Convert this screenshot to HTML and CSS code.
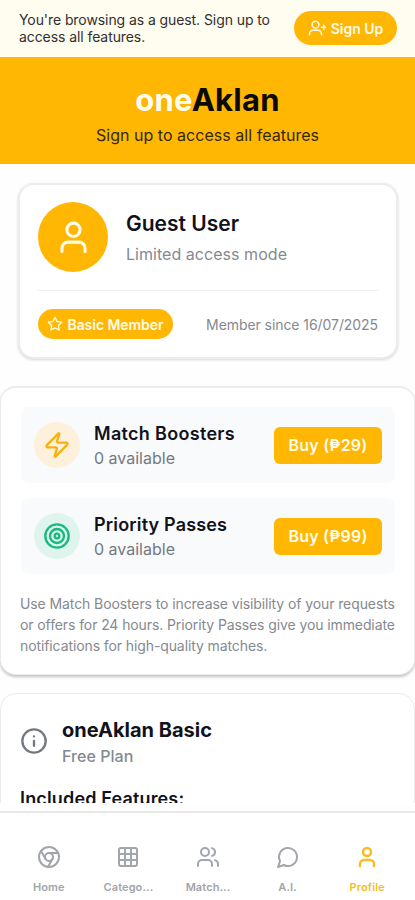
FILE: index.html
```html
<!DOCTYPE html>
<html lang="en">
<head>
<meta charset="utf-8">
<meta name="viewport" content="width=device-width, initial-scale=1">
<title>oneAklan Profile</title>
<link rel="stylesheet" href="styles.css">
</head>
<body>
<div class="app">
  <div class="guest-bar">
    <p class="guest-text">You're browsing as a guest. Sign up to<br>access all features.</p>
    <button class="signup">
      <svg class="icon" width="18" height="18" viewBox="0 0 24 24"><circle cx="10" cy="7.500" r="4.500"/><path d="M2 21v-1a5 5 0 0 1 5-5h6a5 5 0 0 1 5 5v1M21 8v6M18 11h6"/></svg>
      <span>Sign Up</span>
    </button>
  </div>
  <header class="hero">
    <h1 class="brand"><span class="brand-one">one</span>Aklan</h1>
    <p class="tagline">Sign up to access all features</p>
  </header>
  <main class="content">
    <section class="card user-card">
      <div class="user">
        <div class="avatar">
          <svg class="icon" width="37" height="37" viewBox="0 0 24 24"><circle cx="12" cy="7" r="4.300"/><path d="M19.500 21v-2a4 4 0 0 0-4-4h-7a4 4 0 0 0-4 4v2"/></svg>
        </div>
        <div>
          <h2 class="user-name">Guest User</h2>
          <p class="user-mode">Limited access mode</p>
        </div>
      </div>
      <div class="membership">
        <span class="badge">
          <svg class="icon" width="16" height="16" viewBox="0 0 24 24"><path d="m12 2 3.100 6.300 6.900 1-5 4.800 1.200 6.900-6.200-3.200L5.800 21 7 14.100 2 9.300l6.900-1z"/></svg>
          <span>Basic Member</span>
        </span>
        <span class="since">Member since 16/07/2025</span>
      </div>
    </section>
    <section class="card shop-card">
      <div class="product">
        <div class="product-icon boost">
          <svg class="icon" width="28" height="28" viewBox="0 0 24 24"><path d="M4 14a1 1 0 0 1-.78-1.630l9.900-10.200a.5.5 0 0 1 .86.46l-1.920 6.020A1 1 0 0 0 13 10h7a1 1 0 0 1 .78 1.630l-9.900 10.200a.5.5 0 0 1-.86-.46l1.920-6.020A1 1 0 0 0 11 14z"/></svg>
        </div>
        <div class="product-info">
          <h3 class="product-name boost-name">Match Boosters</h3>
          <p class="product-count">0 available</p>
        </div>
        <button class="buy">Buy (₱29)</button>
      </div>
      <div class="product">
        <div class="product-icon pass">
          <svg class="icon" width="28" height="28" viewBox="0 0 24 24"><circle cx="12" cy="12" r="10"/><circle cx="12" cy="12" r="6"/><circle cx="12" cy="12" r="2"/></svg>
        </div>
        <div class="product-info">
          <h3 class="product-name pass-name">Priority Passes</h3>
          <p class="product-count">0 available</p>
        </div>
        <button class="buy">Buy (₱99)</button>
      </div>
      <p class="shop-note">Use Match Boosters to increase visibility of your requests<br>or offers for 24 hours. Priority Passes give you immediate<br>notifications for high-quality matches.</p>
    </section>
    <section class="card plan-card">
      <div class="plan">
        <svg class="icon plan-icon" width="28" height="28" viewBox="0 0 24 24"><circle cx="12" cy="12" r="10"/><path d="M12 16v-4M12 8h.01"/></svg>
        <div>
          <h2 class="plan-name">oneAklan Basic</h2>
          <p class="plan-type">Free Plan</p>
        </div>
      </div>
      <h3 class="features">Included Features:</h3>
    </section>
  </main>
  <nav class="tabs">
    <a class="tab">
      <svg class="icon" width="24" height="24" viewBox="0 0 24 24"><circle cx="12" cy="12" r="10"/><circle cx="12" cy="12" r="4"/><path d="M21.170 8H12M3.950 6.060 8.540 14M10.880 21.940 15.460 14"/></svg>
      <span>Home</span>
    </a>
    <a class="tab">
      <svg class="icon" width="24" height="24" viewBox="0 0 24 24"><rect x="3" y="3" width="18" height="18" rx="2"/><path d="M3 9h18M3 15h18M9 3v18M15 3v18"/></svg>
      <span>Catego...</span>
    </a>
    <a class="tab">
      <svg class="icon" width="24" height="24" viewBox="0 0 24 24"><path d="M16 21v-2a4 4 0 0 0-4-4H6a4 4 0 0 0-4 4v2"/><circle cx="9" cy="7" r="4"/><path d="M22 21v-2a4 4 0 0 0-3-3.870M16 3.130a4 4 0 0 1 0 7.750"/></svg>
      <span>Match...</span>
    </a>
    <a class="tab">
      <svg class="icon" width="24" height="24" viewBox="0 0 24 24"><path d="M7.900 20A9 9 0 1 0 4 16.100L2 22z"/></svg>
      <span>A.I.</span>
    </a>
    <a class="tab active">
      <svg class="icon" width="24" height="24" viewBox="0 0 24 24"><circle cx="12" cy="7" r="4"/><path d="M19 21v-2a4 4 0 0 0-4-4H9a4 4 0 0 0-4 4v2"/></svg>
      <span>Profile</span>
    </a>
  </nav>
</div>
</body>
</html>
```
FILE: styles.css
```css
* { box-sizing: border-box; }
body, h1, h2, h3, p { margin: 0; }
body { background: #fefefe; font-family: Inter, "Noto Sans", sans-serif; color: #11121c; }
button { border: 0; padding: 0; font: inherit; white-space: nowrap; }

.app { display: flex; flex-direction: column; width: 415px; height: 900px; overflow: hidden; }
.icon { display: block; flex: none; fill: none; stroke: currentColor; stroke-width: 2; stroke-linecap: round; stroke-linejoin: round; }

.guest-bar { flex: none; display: flex; justify-content: space-between; align-items: center; height: 57px; padding: 0 18px 1px 19px; background: #fffcf0; }
.guest-text { font-size: 14px; line-height: 17px; letter-spacing: -.08px; white-space: nowrap; color: #30302f; }
.signup { display: flex; align-items: center; justify-content: center; gap: 5px; width: 103px; height: 34px; border-radius: 17px; background: #ffb703; color: #fffbea; font-size: 14px; font-weight: 600; }

.hero { flex: none; height: 107px; padding-top: 25px; background: #ffb703; text-align: center; }
.brand { font-size: 31px; line-height: 36px; font-weight: 700; letter-spacing: .25px; color: #0c0a05; }
.brand-one { color: #fffdf2; }
.tagline { margin-top: 6px; font-size: 16px; line-height: 22px; letter-spacing: .03px; color: #33270a; }

.content { flex: none; height: 639px; overflow: hidden; padding-top: 19px; }
.card { border: 1px solid #ececed; border-radius: 16px; background: #fff; }

.user-card { height: 176px; margin: 0 17px 0 18px; padding: 18px 18px 0; border-width: 2px; box-shadow: 0 1px 3px rgba(0, 0, 0, .16); }
.user { display: flex; align-items: center; gap: 18px; height: 88px; padding-bottom: 19px; border-bottom: 1px solid #f1f1f2; }
.avatar { display: flex; align-items: center; justify-content: center; width: 70px; height: 70px; border-radius: 50%; background: #ffb703; color: #fffbea; }
.user-name { margin-top: 2px; font-size: 21px; line-height: 28px; font-weight: 600; }
.user-mode { margin-top: 4px; font-size: 16px; line-height: 24px; letter-spacing: .04px; color: #858990; }
.membership { display: flex; align-items: center; justify-content: space-between; margin-top: 18px; }
.badge { display: flex; align-items: center; justify-content: center; gap: 4px; width: 135px; height: 30px; border-radius: 15px; background: #ffb703; color: #fffbea; font-size: 14px; font-weight: 600; letter-spacing: -.05px; white-space: nowrap; }
.since { font-size: 14px; letter-spacing: -.07px; color: #858990; white-space: nowrap; }

.shop-card { height: 289px; margin-top: 27px; padding: 19px 19px 0 20px; border-width: 2px 1px 1px; box-shadow: 0 2px 3px rgba(0, 0, 0, .24); }
.product { display: flex; align-items: center; height: 76px; padding: 0 13px; border-radius: 8px; background: #f9fafb; }
.product + .product { margin-top: 15px; }
.product-icon { display: flex; align-items: center; justify-content: center; flex: none; width: 46px; height: 46px; border-radius: 50%; }
.boost { background: #fef1db; color: #f6b00f; }
.pass { background: #def4ec; color: #18b980; }
.product-info { flex: 1; margin-left: 14px; white-space: nowrap; }
.product-name { font-size: 18px; line-height: 25px; font-weight: 600; }
.boost-name { letter-spacing: .31px; }
.pass-name { letter-spacing: .17px; }
.product-count { font-size: 16px; line-height: 24px; color: #747981; }
.buy { width: 108px; height: 37px; border-radius: 6px; background: #ffb703; color: #fffbea; font-size: 16px; font-weight: 600; letter-spacing: .2px; }
.shop-note { margin: 19px 0 0 -1px; font-size: 14px; line-height: 21px; letter-spacing: -.1px; color: #858990; white-space: nowrap; }

.plan-card { height: 160px; margin-top: 18px; padding: 21px 19px; }
.plan { display: flex; align-items: center; gap: 14px; }
.plan-icon { margin-bottom: 2px; color: #747981; }
.plan-name { font-size: 20px; line-height: 30px; font-weight: 700; }
.plan-type { font-size: 16px; line-height: 23px; font-weight: 500; letter-spacing: .04px; color: #858990; }
.features { margin-top: 18px; font-size: 18px; line-height: 26px; font-weight: 600; letter-spacing: .16px; }

.tabs { flex: none; display: grid; grid-template-columns: repeat(5, 1fr); height: 89px; margin-top: 8px; padding: 32px 8px 0 9px; border-top: 2px solid #e7e7e8; background: #fff; }
.tab { display: flex; flex-direction: column; align-items: center; gap: 11px; font-size: 11px; line-height: 14px; font-weight: 600; letter-spacing: .1px; color: #a2a5aa; white-space: nowrap; }
.tab.active { color: #f8bd22; }
.active .icon { stroke-width: 2.5; }
```
